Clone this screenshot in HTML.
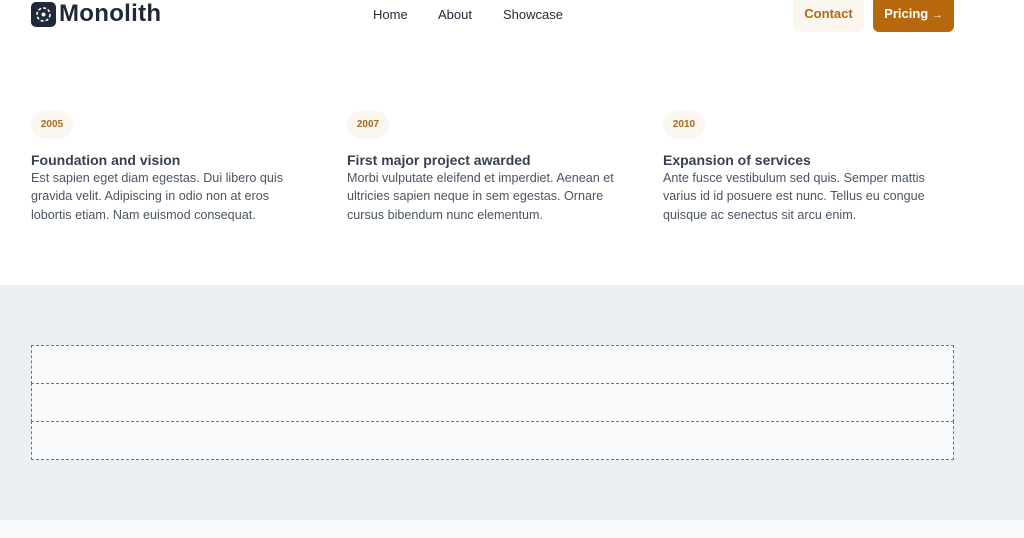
<!DOCTYPE html>
<html><head><meta charset="utf-8"><style>
*{margin:0;padding:0;box-sizing:border-box}
body{width:1024px;height:538px;overflow:hidden;background:#fff;font-family:"Liberation Sans",sans-serif;color:#334155}
.nav{position:absolute;top:0;left:0;width:1024px;height:32px}
.logo{position:absolute;left:31px;top:2px;width:25px;height:25px;background:#1f2937;border-radius:5px}
.brand{position:absolute;left:59px;top:0px;font-size:24px;font-weight:700;color:#1f2937;letter-spacing:0.3px}
.links a{position:absolute;top:7px;font-size:13px;color:#1f2937;text-decoration:none}
.btn{position:absolute;top:-4px;height:36px;border-radius:6px;font-size:13px;font-weight:700;line-height:36px;text-align:center}
.c{left:793px;width:71px;background:#fbf6f0;color:#b06a12}
.p{left:873px;width:81px;background:#b8680c;color:#fff}
.p span{font-size:11px}
.col{position:absolute;top:111px;width:272px}
.yr{display:inline-block;width:42px;height:28px;border-radius:14px;background:#fbf6ef;color:#a86a1f;font-size:10px;font-weight:700;text-align:center;line-height:28px}
h3{margin-top:12px;font-size:14px;color:#374151;line-height:18px}
.col p{font-size:12.6px;color:#4b5563;line-height:18.3px}
.gray{position:absolute;top:285px;left:0;width:1024px;height:235px;background:#ebf0f2}
.bot{position:absolute;top:520px;left:0;width:1024px;height:18px;background:#f8fafc}
.row{position:absolute;left:31px;width:923px;height:39px;border:1px dashed #6b7280;background:#f8fafc}
</style></head><body>
<div class="nav">
<div class="logo"><svg width="25" height="25" viewBox="0 0 25 25"><circle cx="12.5" cy="12.5" r="6.5" fill="none" stroke="#fff" stroke-width="1.6" stroke-dasharray="3 2"/><circle cx="12.5" cy="12.5" r="2" fill="#fff"/></svg></div>
<div class="brand">Monolith</div>
<div class="links"><a style="left:373px">Home</a><a style="left:438px">About</a><a style="left:503px">Showcase</a></div>
<div class="btn c">Contact</div>
<div class="btn p">Pricing <span>→</span></div>
</div>
<div class="col" style="left:31px"><span class="yr">2005</span><h3>Foundation and vision</h3><p>Est sapien eget diam egestas. Dui libero quis gravida velit. Adipiscing in odio non at eros lobortis etiam. Nam euismod consequat.</p></div>
<div class="col" style="left:347px"><span class="yr">2007</span><h3>First major project awarded</h3><p>Morbi vulputate eleifend et imperdiet. Aenean et ultricies sapien neque in sem egestas. Ornare cursus bibendum nunc elementum.</p></div>
<div class="col" style="left:663px"><span class="yr">2010</span><h3>Expansion of services</h3><p>Ante fusce vestibulum sed quis. Semper mattis varius id id posuere est nunc. Tellus eu congue quisque ac senectus sit arcu enim.</p></div>
<div class="gray"></div>
<div class="row" style="top:345px"></div>
<div class="row" style="top:383px"></div>
<div class="row" style="top:421px"></div>
<div class="bot"></div>
</body></html>
